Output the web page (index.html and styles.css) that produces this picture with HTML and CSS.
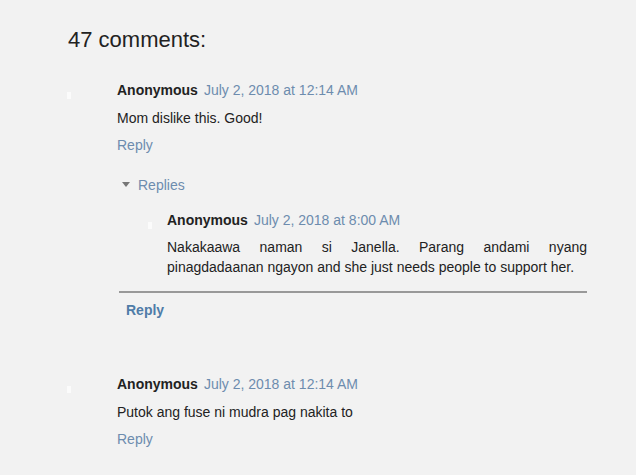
FILE: index.html
```html
<!DOCTYPE html>
<html>
<head>
<meta charset="utf-8">
<link rel="stylesheet" href="styles.css">
</head>
<body>
<div class="page">
  <h4 class="title">47 comments:</h4>

  <div class="comment">
    <div class="avatar"><span class="dot"></span></div>
    <div class="content">
      <div class="head"><span class="user">Anonymous</span><a class="date">July 2, 2018 at 12:14 AM</a></div>
      <p class="body">Mom dislike this. Good!</p>
      <div class="actions"><a class="reply">Reply</a></div>
      <div class="thread">
        <div class="toggle"><span class="tri"></span><a class="replies">Replies</a></div>
        <div class="comment nested">
          <div class="avatar"><span class="dot"></span></div>
          <div class="content">
            <div class="head"><span class="user">Anonymous</span><a class="date">July 2, 2018 at 8:00 AM</a></div>
            <p class="body justify">Nakakaawa naman si Janella. Parang andami nyang pinagdadaanan ngayon and she just needs people to support her.</p>
          </div>
        </div>
        <div class="continue"><a class="reply strong">Reply</a></div>
      </div>
    </div>
  </div>

  <div class="comment second">
    <div class="avatar"><span class="dot"></span></div>
    <div class="content">
      <div class="head"><span class="user">Anonymous</span><a class="date">July 2, 2018 at 12:14 AM</a></div>
      <p class="body">Putok ang fuse ni mudra pag nakita to</p>
      <div class="actions"><a class="reply">Reply</a></div>
    </div>
  </div>
</div>
</body>
</html>
```

FILE: styles.css
```css
html, body {
  margin: 0;
  padding: 0;
  background: #f2f2f2;
}
body {
  font-family: "Liberation Sans", Arial, sans-serif;
  font-size: 14px;
  color: #222;
}
.page {
  padding: 27px 0 0 68px;
  width: 519px;
}
.title {
  margin: 0;
  font-size: 22px;
  font-weight: normal;
  line-height: 26px;
  color: #222;
}
.comment {
  display: flex;
  margin-top: 27px;
}
.avatar {
  width: 49px;
  flex: none;
}
.dot {
  display: block;
  width: 4px;
  height: 7px;
  background: #fbfbfb;
  margin: 12px 0 0 -1px;
}
.content {
  flex: 1;
  min-width: 0;
}
.head {
  line-height: 20px;
  height: 20px;
}
.user {
  font-weight: bold;
  color: #222;
}
.date {
  margin-left: 6px;
  color: #6d8cae;
}
.body {
  margin: 8px 0 0;
  line-height: 20px;
}
.justify {
  text-align: justify;
}
.actions {
  margin-top: 7px;
  line-height: 20px;
}
.reply {
  color: #6d8cae;
}
.reply.strong {
  font-weight: bold;
  color: #4f7ca8;
}
.thread {
  margin: 20px 0 0 2px;
}
.toggle {
  display: flex;
  align-items: center;
  line-height: 20px;
}
.tri {
  width: 0;
  height: 0;
  border-left: 4px solid transparent;
  border-right: 4px solid transparent;
  border-top: 5px solid #777;
  margin: 0 8px 0 3px;
  position: relative;
  top: -1px;
}
.replies {
  color: #6d8cae;
}
.comment.nested {
  margin-top: 15px;
  padding-bottom: 14px;
  border-bottom: 2px solid #999;
}
.nested .avatar {
  width: 48px;
}
.nested .dot {
  margin-left: 29px;
}
.nested .body {
  margin-top: 7px;
}
.continue {
  margin-top: 7px;
  padding-left: 7px;
  line-height: 20px;
}
.comment.second {
  margin-top: 54px;
}
```
